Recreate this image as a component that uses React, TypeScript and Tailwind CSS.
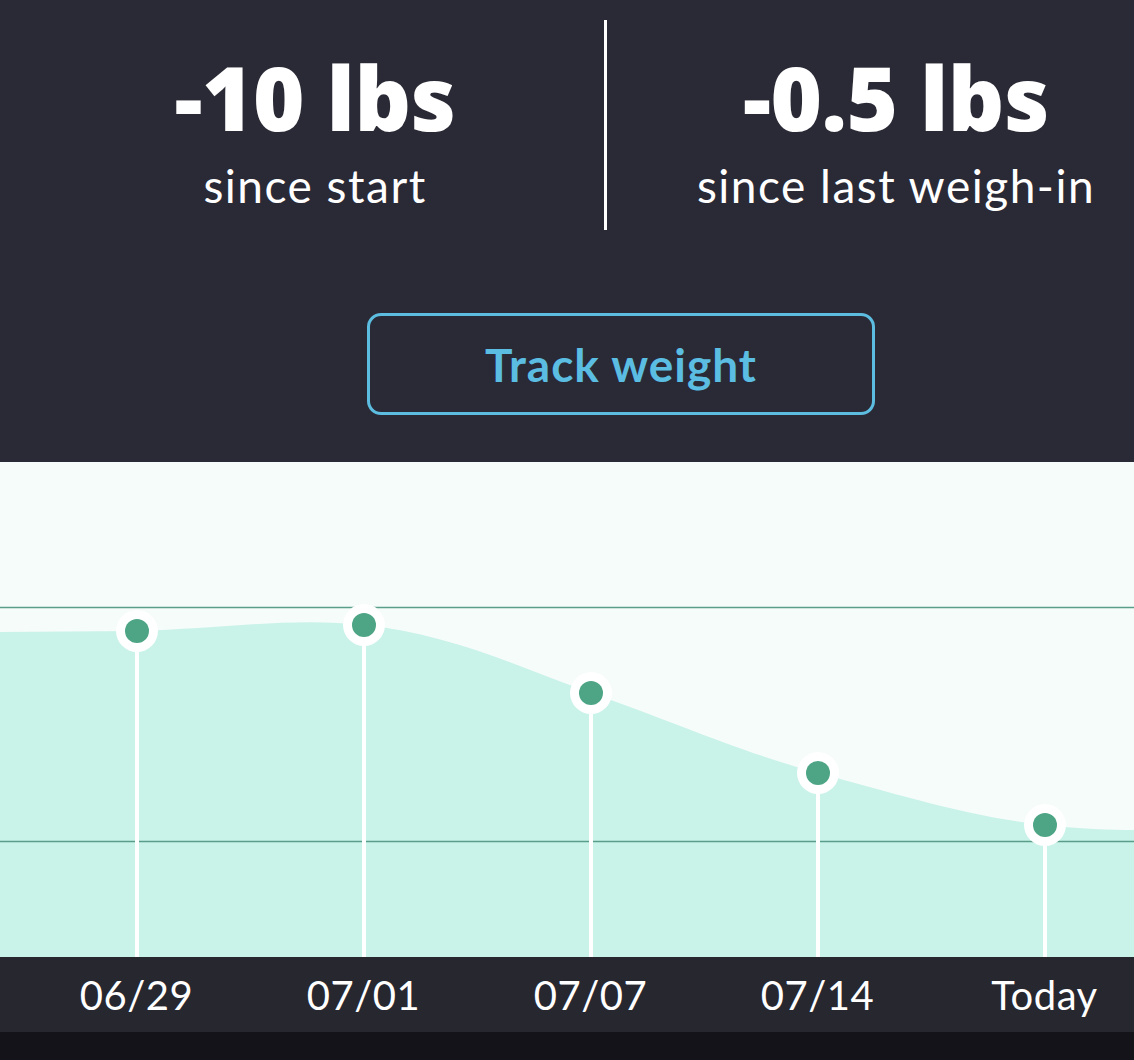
import React from 'react';

const points = [
  { x: 137, y: 169, label: '06/29' },
  { x: 364, y: 163, label: '07/01' },
  { x: 591, y: 231, label: '07/07' },
  { x: 818, y: 311, label: '07/14' },
  { x: 1045, y: 363, label: 'Today' },
];

const areaPath =
  'M0,170 L137,169 C220,167 290,155 364,163 C450,172 520,205 591,231 C680,262 740,290 818,311 C900,333 970,355 1045,363 C1080,367 1110,368 1134,368 L1134,495 L0,495 Z';

const Stat = ({ value, label }: { value: string; label: string }) => (
  <div className="w-[420px] shrink-0 flex flex-col items-center">
    <div
      className="text-[88px] leading-none font-extrabold text-white tracking-[-0.5px] mt-[33px]"
      style={{ fontFamily: '"Open Sans", Lato, sans-serif' }}
    >
      {value}
    </div>
    <div className="text-[46px] leading-none text-white tracking-[1.5px] mt-[22px]">{label}</div>
  </div>
);

export default function App() {
  return (
    <div className="w-[1134px] h-[1060px] flex flex-col bg-[#131319]" style={{ fontFamily: 'Lato, "Open Sans", sans-serif' }}>
      {/* Header */}
      <div className="h-[462px] bg-[#2a2a36] flex flex-col">
        <div className="flex pl-[105px] pt-[20px]">
          <Stat value="-10 lbs" label="since start" />
          <div className="w-[3px] h-[210px] shrink-0 bg-white mx-[79px]" />
          <Stat value="-0.5 lbs" label="since last weigh-in" />
        </div>
        <div className="flex pl-[367px] mt-[83px]">
          <button className="w-[508px] h-[102px] rounded-[14px] border-[3px] border-[#5dbde0] text-[#5bbde2] text-[46px] font-bold tracking-[1px]">
            Track weight
          </button>
        </div>
      </div>

      {/* Chart */}
      <div className="h-[495px] bg-[#f5fcf9]">
        <svg width="1134" height="495" viewBox="0 0 1134 495">
          <path d={areaPath} fill="#c9f2e9" />
          <line x1="0" y1="145.5" x2="1134" y2="145.5" stroke="#5a9e8a" strokeWidth="1.5" />
          <line x1="0" y1="379.5" x2="1134" y2="379.5" stroke="#5a9e8a" strokeWidth="1.5" />
          {points.map((p) => (
            <g key={p.label}>
              <line x1={p.x} y1={p.y} x2={p.x} y2="495" stroke="#ffffff" strokeWidth="4" />
              <circle cx={p.x} cy={p.y} r="21" fill="#ffffff" />
              <circle cx={p.x} cy={p.y} r="12" fill="#4ea586" />
            </g>
          ))}
        </svg>
      </div>

      {/* Dates */}
      <div className="h-[75px] bg-[#272730] flex items-center pl-[23px]">
        {points.map((p) => (
          <div key={p.label} className="w-[227px] shrink-0 text-center text-white text-[40px] leading-none tracking-[0.5px]">
            {p.label}
          </div>
        ))}
      </div>
    </div>
  );
}
